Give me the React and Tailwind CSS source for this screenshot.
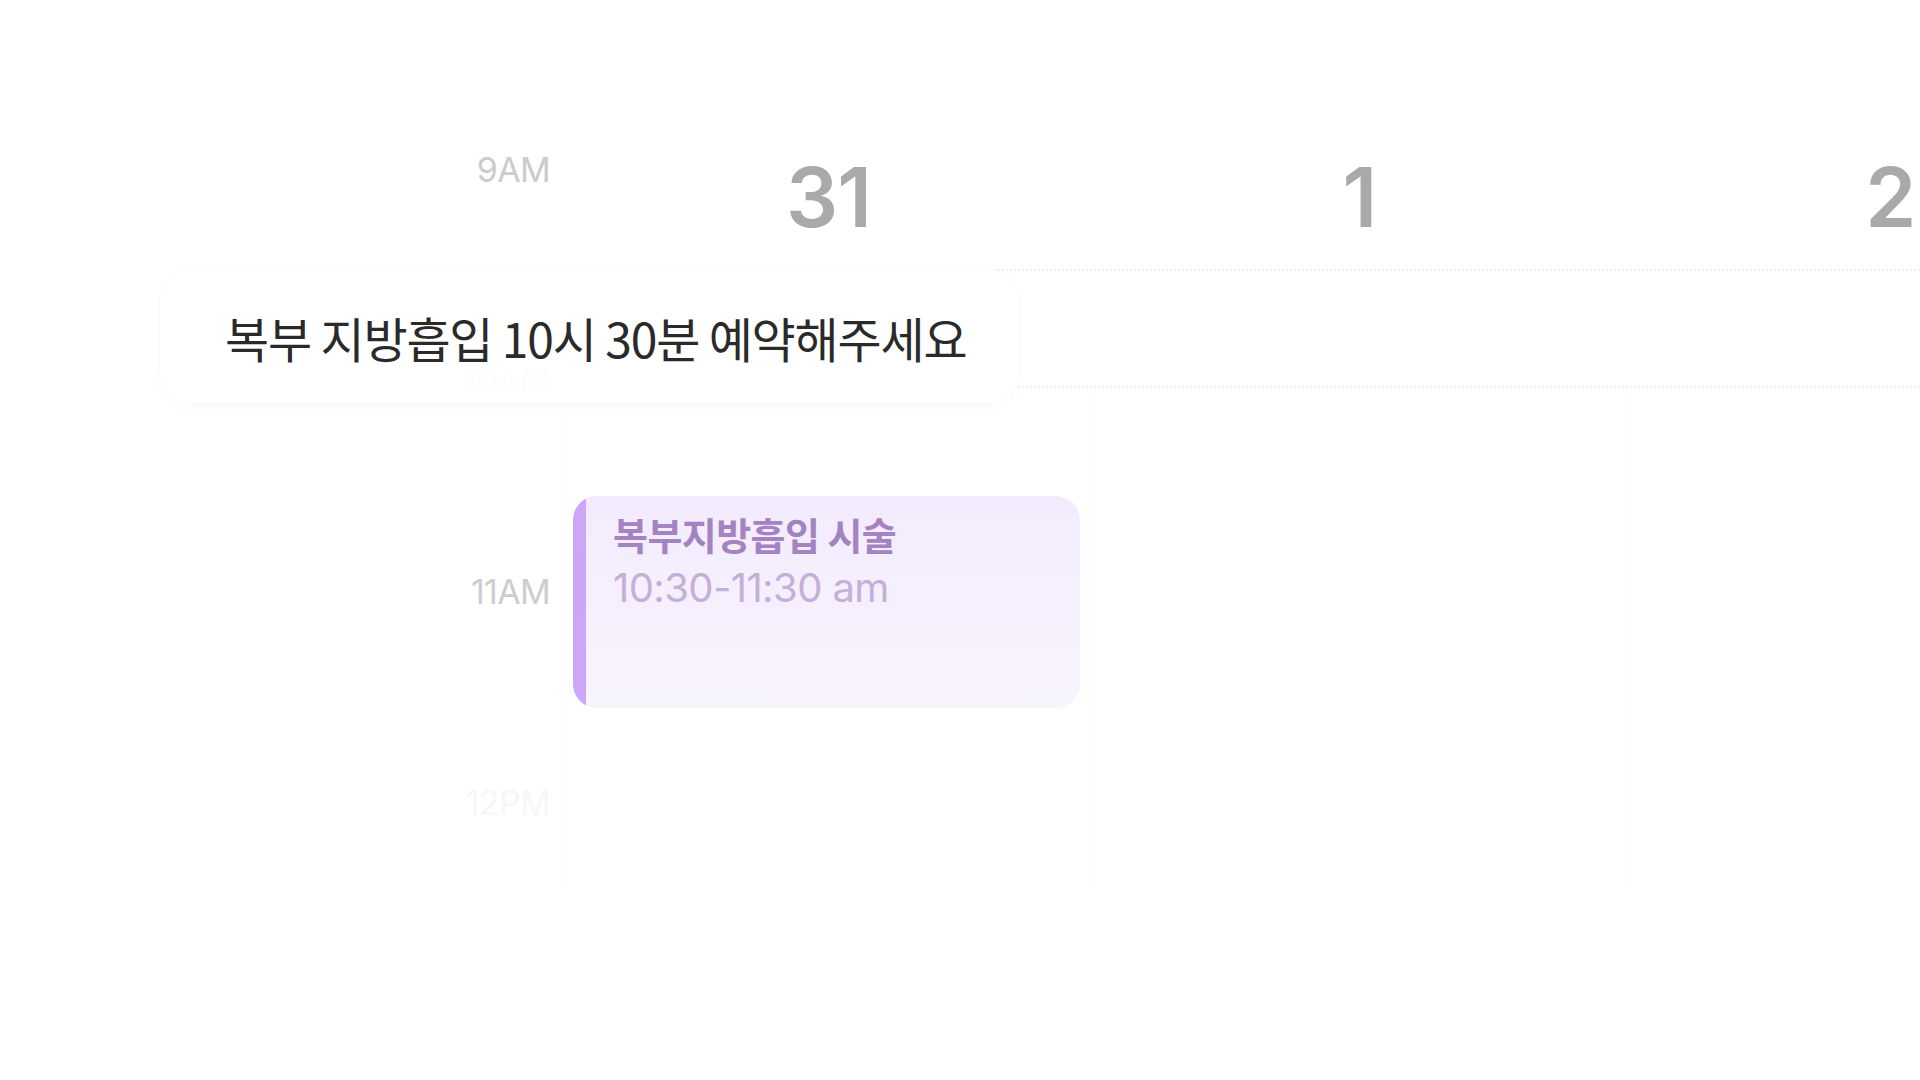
export default function App() {
  const labels = [
    { t: "9AM", c: "text-[#cbcbcb]" },
    { t: "10AM", c: "text-[#cbcbcb]" },
    { t: "11AM", c: "text-[#cdcdcd]" },
    { t: "12PM", c: "text-[#f7f7f7]" },
  ];
  const days = ["31", "1", "2"];
  return (
    <div className="relative w-[1920px] h-[1080px] overflow-hidden bg-white font-['Inter','Noto_Sans_CJK_KR',sans-serif]">
      <div className="flex h-full">
        {/* time gutter */}
        <div className="w-[563px] shrink-0 pr-[13px] pt-[150px] flex flex-col items-end">
          {labels.map((l) => (
            <div key={l.t} className={`h-[211px] text-[34px] leading-[40px] tracking-[-0.02em] ${l.c}`}>
              {l.t}
            </div>
          ))}
        </div>

        {/* day columns */}
        <div className="flex flex-col shrink-0 w-[1593px]">
          <div className="flex h-[269px] pt-[157px]">
            {days.map((d) => (
              <div key={d} className="w-[531px] shrink-0 text-center text-[82px] leading-[82px] font-semibold text-[#a9a9a9] tracking-[-0.01em]">
                {d}
              </div>
            ))}
          </div>
          <div className="h-[119px] border-y-2 border-dotted border-[#efefef]" />
          <div className="flex h-[500px]">
            <div className="w-[531px] shrink-0 border-l border-dotted border-[#f9f9f9] pl-[9px] pr-[14px] pt-[108px]">
              <div className="flex h-[212px] rounded-[24px] overflow-hidden bg-gradient-to-b from-[#f3ebfd] to-[#f8f4fe]">
                <div className="w-[13px] shrink-0 bg-[#cba6f9]" />
                <div className="pl-[27px] pt-[14px] flex flex-col">
                  <div className="text-[38px] leading-[48px] font-semibold text-[#a383c2] tracking-[-0.015em] font-['Noto_Sans_CJK_KR',sans-serif]">
                    복부지방흡입 시술
                  </div>
                  <div className="mt-[6px] text-[40px] leading-[48px] text-[#c3afd9] tracking-[-0.015em]">
                    10:30-11:30 am
                  </div>
                </div>
              </div>
            </div>
            <div className="w-[531px] shrink-0 border-l border-dotted border-[#f9f9f9]" />
            <div className="w-[531px] shrink-0 border-l border-dotted border-[#f9f9f9]" />
          </div>
        </div>
      </div>

      {/* request bubble overlay */}
      <div className="absolute left-[159px] top-[269px] w-[861px] h-[135px] rounded-[32px] bg-white/95 border border-dotted border-[#f4f4f4] shadow-[0_10px_16px_-14px_rgba(200,185,240,0.25)] flex items-center pl-[65px]">
        <span className="text-[48px] leading-none text-[#2a2a2a] tracking-[-0.025em] font-['Noto_Sans_CJK_KR',sans-serif]">
          복부 지방흡입 10시 30분 예약해주세요
        </span>
      </div>
    </div>
  );
}
